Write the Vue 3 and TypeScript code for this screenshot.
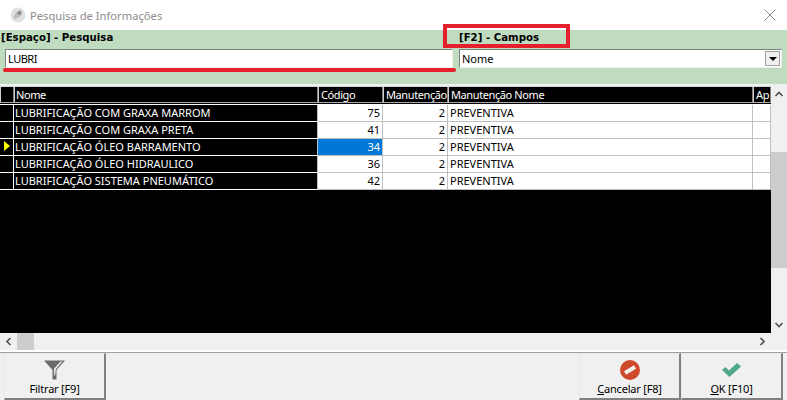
<script setup lang="ts">
interface Row {
  nome: string;
  codigo: number;
  manutencao: number;
  manutencaoNome: string;
  active?: boolean;
}

const rows: Row[] = [
  { nome: "LUBRIFICAÇÃO COM GRAXA MARROM", codigo: 75, manutencao: 2, manutencaoNome: "PREVENTIVA" },
  { nome: "LUBRIFICAÇÃO COM GRAXA PRETA", codigo: 41, manutencao: 2, manutencaoNome: "PREVENTIVA" },
  { nome: "LUBRIFICAÇÃO ÓLEO BARRAMENTO", codigo: 34, manutencao: 2, manutencaoNome: "PREVENTIVA", active: true },
  { nome: "LUBRIFICAÇÃO ÓLEO HIDRAULICO", codigo: 36, manutencao: 2, manutencaoNome: "PREVENTIVA" },
  { nome: "LUBRIFICAÇÃO SISTEMA PNEUMÁTICO", codigo: 42, manutencao: 2, manutencaoNome: "PREVENTIVA" }
];
</script>

<template>
  <div class="window">
    <header class="titlebar">
      <svg class="app-icon" width="16" height="16" viewBox="0 0 16 16">
        <circle cx="8" cy="8" r="7.5" fill="#e2e2e2" />
        <path d="M4 12 C3 8 6 4 11 3 C13 6 11 11 4 12 Z" fill="#bdbdbd" />
        <circle cx="9.5" cy="6" r="2" fill="#8f8f8f" />
      </svg>
      <span class="title">Pesquisa de Informações</span>
      <svg class="close" width="12" height="12" viewBox="0 0 12 12">
        <path d="M0.5 0.5 L11.5 11.5 M11.5 0.5 L0.5 11.5" stroke="#8a8a8a" stroke-width="1" fill="none" />
      </svg>
    </header>

    <section class="search">
      <div class="search-field main">
        <label>[Espaço] - Pesquisa</label>
        <div class="input">LUBRI</div>
        <div class="mark-line"></div>
      </div>
      <div class="search-field side">
        <label>[F2] - Campos</label>
        <div class="input select">
          <span>Nome</span>
          <span class="drop"><i></i></span>
        </div>
        <div class="mark-box"></div>
      </div>
    </section>

    <section class="grid-wrap">
      <div class="grid-main">
        <div class="grid-scroll">
          <div class="grid-row head">
            <div class="cell ind"></div>
            <div class="cell first">Nome</div>
            <div class="cell">Código</div>
            <div class="cell">Manutenção</div>
            <div class="cell">Manutenção Nome</div>
            <div class="cell clip">Ap</div>
          </div>
          <div class="grid-body">
            <div v-for="row in rows" :key="row.codigo" class="grid-row body">
              <div class="cell ind"><i v-if="row.active" class="pointer"></i></div>
              <div class="cell dark first">{{ row.nome }}</div>
              <div class="cell num" :class="{ active: row.active }">{{ row.codigo }}</div>
              <div class="cell num">{{ row.manutencao }}</div>
              <div class="cell">{{ row.manutencaoNome }}</div>
              <div class="cell"></div>
            </div>
          </div>
        </div>
        <div class="vbar">
          <svg width="16" height="17" viewBox="0 0 16 17"><path d="M4.5 10 L8 6.5 L11.5 10" stroke="#505050" stroke-width="1.6" fill="none" /></svg>
          <div class="vtrack"><div class="vthumb"></div></div>
          <svg width="16" height="17" viewBox="0 0 16 17"><path d="M4.5 7 L8 10.5 L11.5 7" stroke="#505050" stroke-width="1.6" fill="none" /></svg>
        </div>
      </div>
      <div class="hbar">
        <svg width="17" height="17" viewBox="0 0 17 17"><path d="M10.5 5 L7 8.5 L10.5 12" stroke="#505050" stroke-width="1.6" fill="none" /></svg>
        <div class="hthumb"></div>
        <svg class="right" width="17" height="17" viewBox="0 0 17 17"><path d="M6.5 5 L10 8.5 L6.5 12" stroke="#505050" stroke-width="1.6" fill="none" /></svg>
      </div>
    </section>

    <footer class="actions">
      <button class="btn" type="button">
        <svg width="21" height="19" viewBox="0 0 21 19">
          <path d="M0 0 H21 L12.5 9.5 V19 H8.5 V9.5 Z" fill="#6a6a6a" />
          <path d="M16.5 1 L18.5 1 L12 8.5 L11 15 H10 V8 Z" fill="#e4e4e4" />
        </svg>
        <span>Filtrar [F9]</span>
      </button>
      <div class="spacer"></div>
      <button class="btn" type="button">
        <svg width="20" height="20" viewBox="0 0 20 20">
          <circle cx="10" cy="10" r="10" fill="#cf4a2b" />
          <path d="M5 13 L15 7" stroke="#f4f0ee" stroke-width="4" />
        </svg>
        <span><u>C</u>ancelar [F8]</span>
      </button>
      <button class="btn" type="button">
        <svg width="19" height="14" viewBox="0 0 19 14">
          <path d="M0 7 L3.5 4 L7 7.5 L15 0 L19 3.5 L7.5 14 Z" fill="#4fa88a" />
        </svg>
        <span><u>O</u>K [F10]</span>
      </button>
    </footer>
  </div>
</template>

<style>
html,
body {
  margin: 0;
  background: #fff;
}
</style>

<style scoped>
.window {
  width: 787px;
  height: 400px;
  display: flex;
  flex-direction: column;
  overflow: hidden;
  background: #f0f0f0;
  font-family: "Noto Sans", "Liberation Sans", sans-serif;
  font-size: 11px;
  color: #000;
}

.titlebar {
  height: 30px;
  flex: none;
  display: flex;
  align-items: center;
  gap: 4px;
  padding: 0 11px 0 10px;
  background: #fff;
}

.title {
  flex: 1;
  font-size: 11.2px;
  color: #8c8c8c;
}

.search {
  height: 54px;
  flex: none;
  display: flex;
  gap: 6px;
  padding-right: 5px;
  background: #c0dcc0;
}

.search-field {
  position: relative;
  display: flex;
  flex-direction: column;
}

.search-field label {
  height: 19px;
  line-height: 15px;
  font-family: "DejaVu Sans", sans-serif;
  font-size: 10.2px;
  font-weight: 700;
  white-space: nowrap;
}

.main {
  width: 453px;
  padding-left: 1px;
  box-sizing: border-box;
}

.main .input {
  margin-left: 4px;
  letter-spacing: -0.5px;
}

.side {
  flex: 1;
}

.input {
  height: 19px;
  box-sizing: border-box;
  display: flex;
  align-items: center;
  justify-content: space-between;
  padding-left: 2px;
  background: #fff;
  border-top: 1px solid #808080;
  border-left: 1px solid #808080;
  border-right: 1px solid #f0f0f0;
  border-bottom: 1px solid #f0f0f0;
}

.drop {
  width: 15px;
  height: 15px;
  margin-right: 1px;
  display: flex;
  align-items: center;
  justify-content: center;
  background: #f0f0f0;
  border: 1px solid #a0a0a0;
  box-sizing: border-box;
}

.drop i {
  border-top: 4px solid #000;
  border-left: 4px solid transparent;
  border-right: 4px solid transparent;
}

.mark-line {
  position: absolute;
  left: 3px;
  right: -3px;
  top: 38px;
  height: 4px;
  border-radius: 2px;
  background: #e3202b;
}

.mark-box {
  position: absolute;
  left: -16px;
  top: -6px;
  width: 127px;
  height: 24px;
  box-sizing: border-box;
  border: 4px solid #e3202b;
}

.grid-wrap {
  height: 268px;
  flex: none;
  display: flex;
  flex-direction: column;
  padding-top: 2px;
  box-sizing: border-box;
  background: #f0f0f0;
  border-bottom: 2px solid #fff;
}

.grid-main {
  flex: 1;
  display: flex;
  min-height: 0;
}

.grid-scroll {
  flex: 1;
  background: #000;
}

.grid-body {
  border-top: 1px solid #fff;
}

.grid-row {
  display: grid;
  grid-template-columns: 14px 304px 65px 65px 305px 18px;
  height: 17px;
  overflow: hidden;
}

.cell {
  box-sizing: border-box;
  padding: 0 2px;
  line-height: 16px;
  white-space: nowrap;
  overflow: hidden;
  border-right: 1px solid #c0c0c0;
  border-bottom: 1px solid #c0c0c0;
}

.cell.first {
  padding-left: 1px;
}

.head {
  margin-bottom: 1px;
  box-sizing: border-box;
  color: #fff;
  background: #000;
  border-top: 1px solid #d8d8d8;
  border-bottom: 1px solid #a8a8a8;
  letter-spacing: -0.4px;
}

.head .cell {
  line-height: 15px;
  padding: 0 1px 0 2px;
  border: 0;
  border-left: 1px solid #d0d0d0;
  border-right: 1px solid #808080;
}

.head .cell.first {
  padding-left: 1px;
}

.body {
  background: #fff;
}

.ind {
  position: relative;
  padding: 0;
  background: #000;
  border-right-color: #fff;
  border-bottom-color: #fff;
}

.dark {
  background: #000;
  color: #fff;
  border-bottom-color: #fff;
}

.num {
  text-align: right;
}

.active {
  background: #0078d7;
  color: #fff;
}

.pointer {
  position: absolute;
  left: 4px;
  top: 2px;
  border-left: 6px solid #ffff00;
  border-top: 5px solid transparent;
  border-bottom: 5px solid transparent;
}

.clip {
  padding-left: 1px;
}

.vbar {
  width: 16px;
  flex: none;
  display: flex;
  flex-direction: column;
  background: #f0f0f0;
}

.vtrack {
  flex: 1;
  padding-top: 49px;
}

.vthumb {
  height: 116px;
  background: #cdcdcd;
}

.hbar {
  height: 17px;
  flex: none;
  display: flex;
  padding-right: 16px;
  background: #f0f0f0;
}

.hthumb {
  width: 17px;
  background: #cdcdcd;
}

.hbar .right {
  margin-left: auto;
}

.actions {
  flex: 1;
  display: flex;
  padding: 0 4px 0 4px;
  background: #f0f0f0;
  border-top: 1px solid #a0a0a0;
}

.spacer {
  flex: 1;
}

.btn {
  width: 102px;
  height: 47px;
  padding: 6px 0 0;
  display: flex;
  flex-direction: column;
  align-items: center;
  justify-content: flex-start;
  font: inherit;
  letter-spacing: -0.2px;
  color: #000;
  background: #f0f0f0;
  border-top: 1px solid #e8e8e8;
  border-left: 1px solid #e8e8e8;
  border-right: 2px solid #808080;
  border-bottom: 2px solid #808080;
}

.btn svg {
  height: 20px;
  flex: none;
}

.btn span {
  margin-top: 1px;
  line-height: 15px;
}
</style>
